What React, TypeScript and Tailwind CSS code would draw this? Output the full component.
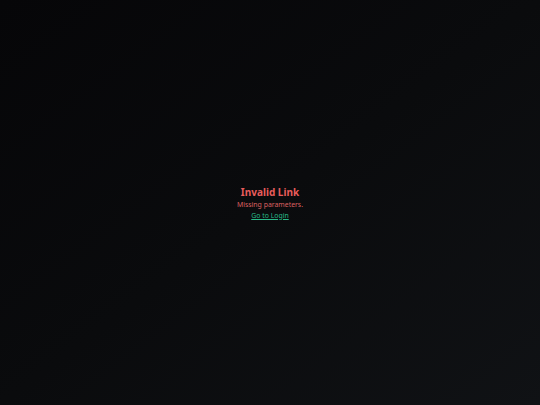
import React from "react";

export default function App() {
  return (
    <div
      className="w-[540px] h-[405px] flex flex-col items-center justify-center bg-gradient-to-br from-[#060608] via-[#0a0b0d] to-[#101215]"
      style={{ fontFamily: '"Noto Sans", sans-serif' }}
    >
      <div className="flex flex-col items-center">
        <h1 className="text-[10px] leading-[14px] font-bold text-[#e85c5c]">Invalid Link</h1>
        <p className="mt-[1px] text-[6.9px] leading-[10px] text-[#dc6060]">Missing parameters.</p>
        <a href="#" className="mt-[1px] text-[6.9px] leading-[10px] text-[#28b987] underline">
          Go to Login
        </a>
      </div>
    </div>
  );
}
